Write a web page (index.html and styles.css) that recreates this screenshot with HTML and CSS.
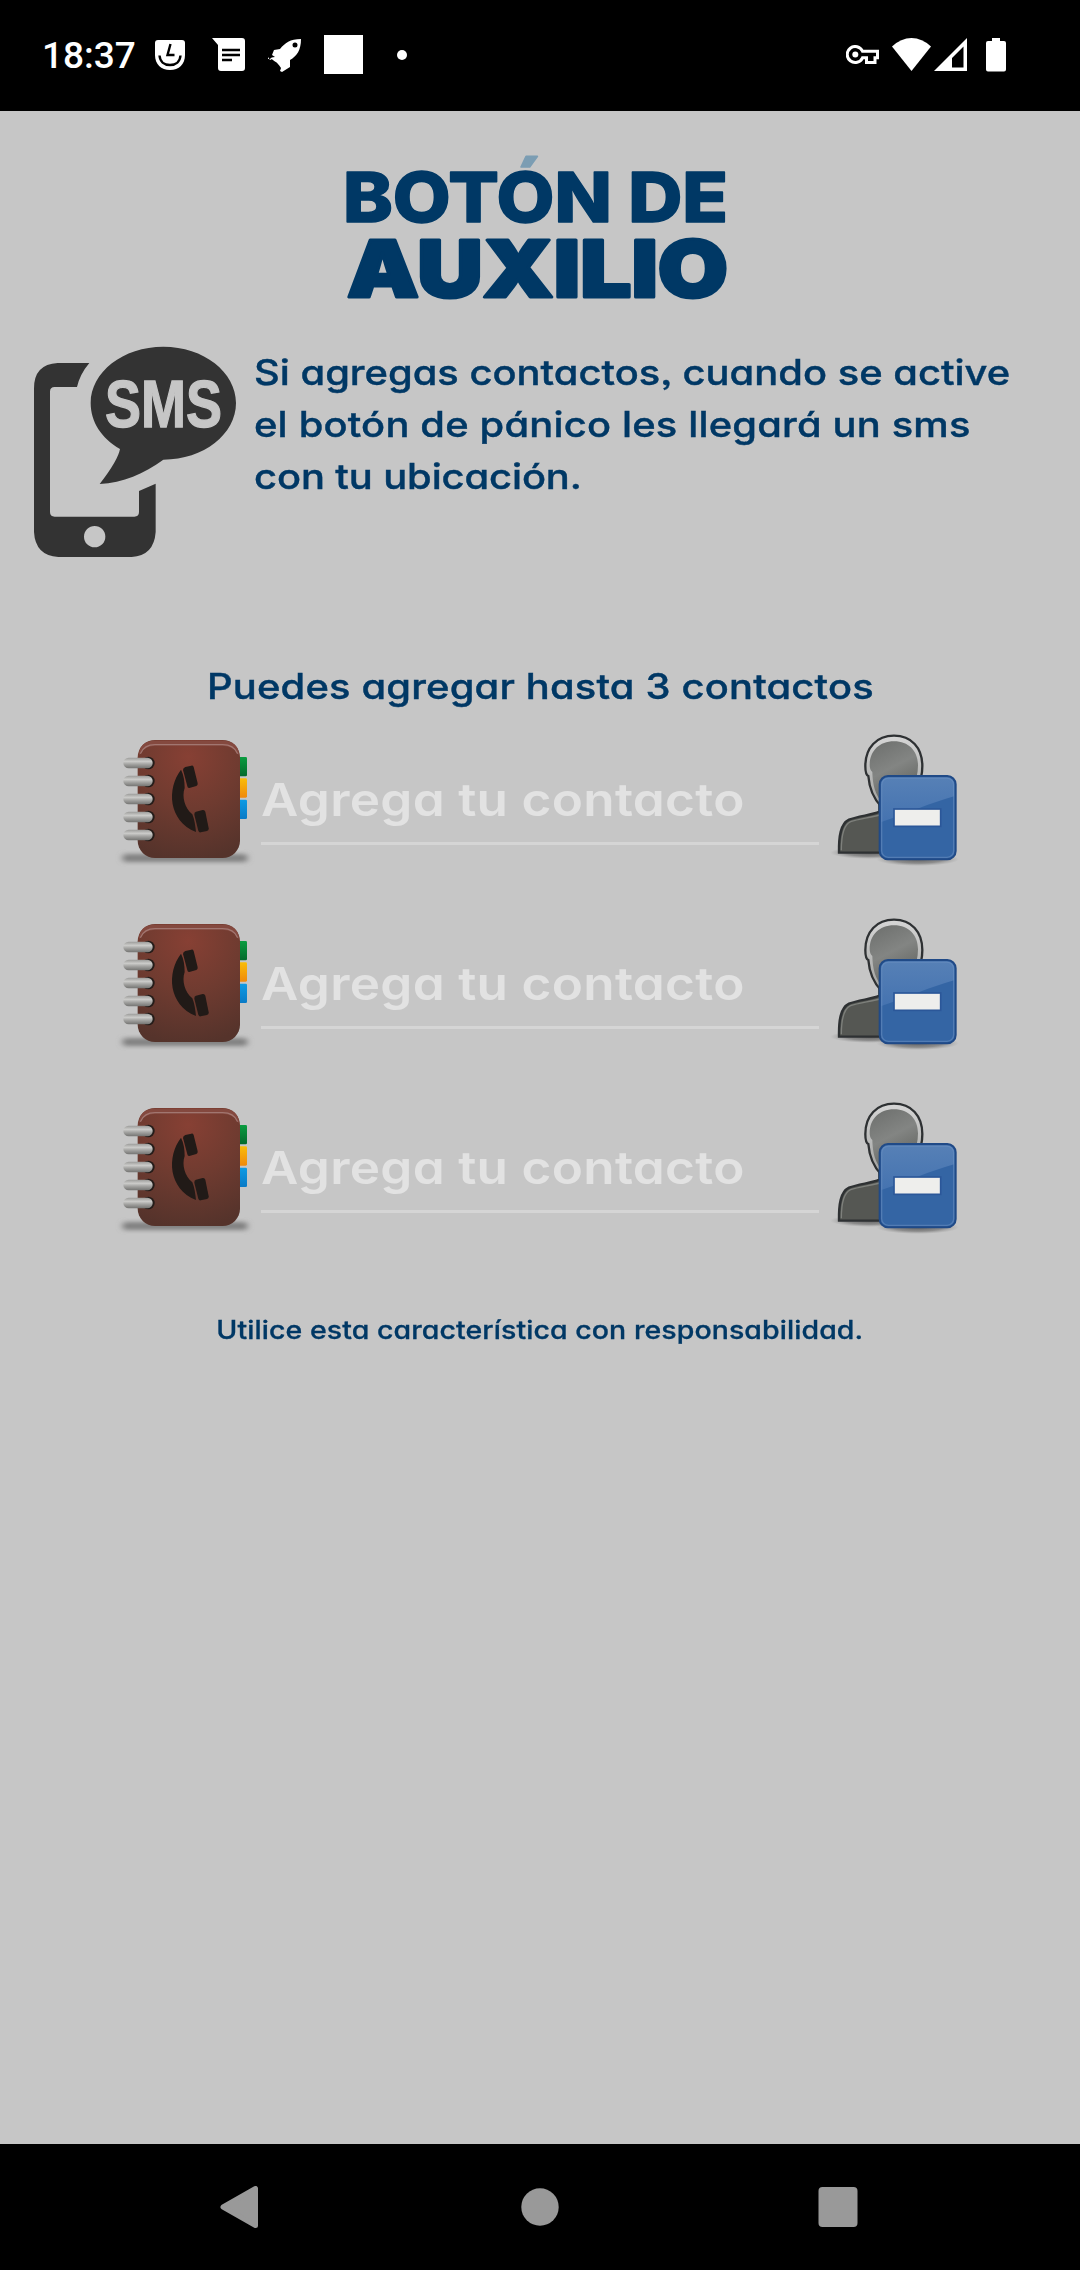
FILE: index.html
```html
<!DOCTYPE html>
<html lang="es">
<head>
<meta charset="utf-8">
<title>Botón de auxilio</title>
<link rel="stylesheet" href="styles.css">
</head>
<body>
<svg class="defs" width="0" height="0" aria-hidden="true">
  <defs>
    <radialGradient id="cover" cx="235" cy="110" r="310" gradientUnits="userSpaceOnUse"><stop offset="0" stop-color="#874034"/><stop offset=".5" stop-color="#6f3b30"/><stop offset="1" stop-color="#55332b"/></radialGradient>
    <linearGradient id="ring" x2="0" y2="1"><stop offset="0" stop-color="#9b9b99"/><stop offset=".35" stop-color="#cbcbc9"/><stop offset=".6" stop-color="#a5a5a3"/><stop offset="1" stop-color="#737371"/></linearGradient>
    <linearGradient id="green" x2="0" y2="1"><stop offset="0" stop-color="#0a9c40"/><stop offset="1" stop-color="#046a2c"/></linearGradient>
    <linearGradient id="amber" x2="0" y2="1"><stop offset="0" stop-color="#f9bd08"/><stop offset="1" stop-color="#f0890c"/></linearGradient>
    <linearGradient id="sky" x2="0" y2="1"><stop offset="0" stop-color="#0e9be4"/><stop offset="1" stop-color="#0a7ac6"/></linearGradient>
    <linearGradient id="head" x1=".2" x2=".6" y2="1"><stop offset="0" stop-color="#6f716f"/><stop offset=".45" stop-color="#838583"/><stop offset="1" stop-color="#5c5e5a"/></linearGradient>
    <linearGradient id="rim" x2="0" y2="1"><stop offset="0" stop-color="#d6d6d6"/><stop offset="1" stop-color="#a0a19f"/></linearGradient>
    <linearGradient id="gloss" x2="0" y2="1"><stop offset="0" stop-color="#5680b6"/><stop offset="1" stop-color="#4573b0"/></linearGradient>
    <radialGradient id="shade"><stop offset="0" stop-color="#555" stop-opacity=".9"/><stop offset=".6" stop-color="#666" stop-opacity=".6"/><stop offset="1" stop-color="#888" stop-opacity="0"/></radialGradient>
    <filter id="soft" x="-10%" y="-100%" width="120%" height="300%"><feGaussianBlur stdDeviation="9 7"/></filter>
    <symbol id="book" viewBox="0 0 450 480">
      <rect x="38" y="402" width="374" height="24" rx="10" fill="#808080" filter="url(#soft)"/>
      <rect x="380" y="111" width="31" height="58" rx="4" fill="url(#green)"/>
      <rect x="380" y="175" width="31" height="58" rx="4" fill="url(#amber)"/>
      <rect x="380" y="239" width="31" height="58" rx="4" fill="url(#sky)"/>
      <rect x="83" y="60" width="307" height="354" rx="52" fill="url(#cover)"/>
      <path d="M86 108Q88 62 135 62H338Q385 62 388 108Q376 79 338 77H135Q98 79 86 108Z" fill="#84493f"/>
      <path d="M91 101Q103 74 135 74H338Q371 74 383 101" fill="none" stroke="#a17670" stroke-width="4"/>
      <g fill="#241c19"><circle cx="115" cy="129" r="19"/><circle cx="115" cy="183" r="19"/><circle cx="115" cy="237" r="19"/><circle cx="115" cy="291" r="19"/><circle cx="115" cy="345" r="19"/></g>
      <g fill="url(#ring)"><rect x="40" y="113" width="88" height="32" rx="16"/><rect x="40" y="167" width="88" height="32" rx="16"/><rect x="40" y="221" width="88" height="32" rx="16"/><rect x="40" y="275" width="88" height="32" rx="16"/><rect x="40" y="329" width="88" height="32" rx="16"/></g>
      <g fill="#211a17">
        <path d="M213 149C170 205 174 302 258 336C256 316 253 296 247 283C224 264 215 230 224 204C224 183 221 164 213 149Z"/>
        <path d="M226 141L244 137Q249 136 251 141L263 190Q264 196 259 198L238 204Q233 205 232 199L219 150Q219 144 226 141Z"/>
        <path d="M258 275L278 270Q284 269 286 275L296 325Q297 331 291 333L272 337Q267 338 265 332L253 284Q252 277 258 275Z"/>
      </g>
    </symbol>
    <symbol id="remove" viewBox="0 0 480 480">
      <ellipse cx="150" cy="398" rx="120" ry="19" fill="url(#shade)"/>
      <ellipse cx="293" cy="418" rx="124" ry="20" fill="url(#shade)"/>
      <path d="M57 398C56 350 61 312 87 299C115 287 155 286 178 275V243H230V398Z" fill="#555753" stroke="#2e3133" stroke-width="7"/>
      <path d="M64 391C64 352 69 315 92 305C120 296 155 293 190 282" fill="none" stroke="#7e807c" stroke-width="4"/>
      <path d="M184 260C155 230 147 195 145 168Q136 165 136 138C136 83 170 47 222 47S307 83 307 138C307 190 285 230 240 260Z" fill="url(#rim)" stroke="#2e3133" stroke-width="7"/>
      <path d="M190 252C165 225 158 195 157 156Q149 150 149 136C149 94 177 64 222 64S294 94 294 136C294 185 270 230 235 252Z" fill="url(#head)"/>
      <rect x="179" y="168" width="228" height="250" rx="25" fill="#3465a4" stroke="#204a87" stroke-width="6"/>
      <path d="M184 306V195Q184 173 206 173H380Q402 173 402 195V229C330 249 260 281 184 306Z" fill="url(#gloss)"/>
      <rect x="185" y="174" width="216" height="238" rx="20" fill="none" stroke="#6f94c4" stroke-opacity=".5" stroke-width="4"/>
      <rect x="222" y="267" width="140" height="52" fill="#eeeeec" stroke="#2b5799" stroke-width="5"/>
    </symbol>
  </defs>
</svg>

<header class="status">
  <div class="status-left">
    <span class="clock">18:37</span>
    <svg class="i-shield" width="30" height="30" viewBox="0 0 30 30"><path d="M3 0H27Q30 0 30 3V15C30 24 24 30 15 30S0 24 0 15V3Q0 0 3 0Z" fill="#fff"/><path d="M15.500 4L12.500 15H19.500" fill="none" stroke="#000" stroke-width="2.400"/><path d="M4.500 15.500C5 21.500 9 25 15 25S25 21.500 25.500 15.500" fill="none" stroke="#000" stroke-width="2.400"/></svg>
    <svg class="i-message" width="33" height="34" viewBox="0 0 33 34"><path d="M0 0H30Q33 0 33 3V30Q33 33 30 33H9Q6 33 6 30V7Z" fill="#fff"/><path d="M10 12H28M10 17H28M10 22H20" stroke="#000" stroke-width="2.600"/></svg>
    <svg class="i-rocket" width="34" height="34" viewBox="0 0 34 34"><path fill="#fff" fill-rule="evenodd" d="M33 0C22 0 17 4 12 10L6 11L4 16L7 18Q3 18 2 20L0 20V18L2 21L4 20C5 22 9 22 13 29L12 32L14 33L22 28V21C29 17 33 11 33 0ZM27 3.500A2.500 2.500 0 1 1 27 8.500A2.500 2.500 0 1 1 27 3.500Z"/></svg>
    <span class="tile"></span>
    <span class="dot"></span>
  </div>
  <div class="status-right">
    <svg width="33" height="20" viewBox="0 0 33 20"><path d="M16.500 6.200A8 8 0 1 0 16.500 12.800H20.500V17.500H29V12.800H31.500V6.200Z" fill="none" stroke="#fff" stroke-width="3"/><circle cx="9.300" cy="9.500" r="3" fill="#fff"/></svg>
    <svg class="i-wifi" width="39" height="33" viewBox="0 0 39 33"><path d="M0 8.500Q9 0 19.500 0T39 8.500L19.500 33Z" fill="#fff"/></svg>
    <svg class="i-signal" width="33" height="33" viewBox="0 0 33 33"><path d="M33 0V33H0ZM29.500 8.500L18 20V29.500H29.500Z" fill="#fff" fill-rule="evenodd"/></svg>
    <svg class="i-battery" width="20" height="34" viewBox="0 0 20 34"><path d="M6 0H14V3H18Q20 3 20 5V31.500Q20 33.500 18 33.500H2Q0 33.500 0 31.500V5Q0 3 2 3H6Z" fill="#fff"/></svg>
  </div>
</header>

<main class="screen">
  <h1 class="logo">
    <svg width="430" height="190" viewBox="320 130 430 190">
      <defs><linearGradient id="accent" gradientUnits="userSpaceOnUse" x1="0" y1="150" x2="0" y2="230"><stop offset=".225" stop-color="#7b9db3"/><stop offset=".225" stop-color="#003865"/></linearGradient></defs>
      <text class="logo-top" x="343" y="222" textLength="385" lengthAdjust="spacingAndGlyphs" fill="url(#accent)" stroke="url(#accent)">BOTÓN DE</text>
      <text class="logo-bottom" x="347" y="297" textLength="381" lengthAdjust="spacingAndGlyphs">AUXILIO</text>
    </svg>
  </h1>

  <section class="intro">
    <svg width="230" height="240" viewBox="0 0 690 720">
      <path fill="#333" fill-rule="evenodd" d="M208 99H113Q42 103 42 175V606Q46 677 115 681H335Q402 677 407 606V461L357 483V546Q357 560 343 560H104Q90 560 90 546V185Q90 171 104 171H171Q180 132 208 99ZM224 588A32 32 0 1 1 224 652A32 32 0 1 1 224 588Z"/>
      <path fill="#333" d="M430 50C551 50 648 126 648 219S551 389 430 389C372 431 309 458 239 462Q294 391 300 357C245 325 212 277 212 219C212 126 309 50 430 50Z"/>
      <text class="sms" x="255" y="290" textLength="351" lengthAdjust="spacingAndGlyphs">SMS</text>
    </svg>
    <p class="intro-text"><span class="line wide">Si agregas contactos, cuando se active</span> <span class="line wide second">el botón de pánico les llegará un sms</span> <span class="line wide third">con tu ubicación.</span></p>
  </section>

  <h2 class="subtitle wide">Puedes agregar hasta 3 contactos</h2>

  <ul class="contacts">
    <li class="contact"><svg width="150" height="160"><use href="#book"/></svg><div class="field"><span class="line wide">Agrega tu contacto</span></div><svg width="160" height="160"><use href="#remove"/></svg></li>
    <li class="contact"><svg width="150" height="160"><use href="#book"/></svg><div class="field"><span class="line wide">Agrega tu contacto</span></div><svg width="160" height="160"><use href="#remove"/></svg></li>
    <li class="contact"><svg width="150" height="160"><use href="#book"/></svg><div class="field"><span class="line wide">Agrega tu contacto</span></div><svg width="160" height="160"><use href="#remove"/></svg></li>
  </ul>

  <p class="notice wide">Utilice esta característica con responsabilidad.</p>
</main>

<nav class="navbar">
  <svg width="42" height="42" viewBox="0 0 42 42"><path d="M3 21L35.500 2.500V39.500Z" fill="#999" stroke="#999" stroke-width="5" stroke-linejoin="round"/></svg>
  <svg width="38" height="38" viewBox="0 0 38 38"><circle cx="19" cy="19" r="18.700" fill="#999"/></svg>
  <svg width="40" height="40" viewBox="0 0 40 40"><rect x=".5" width="39" height="40" rx="4" fill="#999"/></svg>
</nav>
</body>
</html>
```
FILE: styles.css
```css
* { box-sizing: border-box; }
body {
  margin: 0;
  width: 1080px;
  height: 2270px;
  display: flex;
  flex-direction: column;
  background: #c6c6c6;
  color: #003865;
  font-family: Inter, "Open Sans", sans-serif;
  font-feature-settings: "cv11", "ss03";
  overflow: hidden;
}
svg { display: block; flex: none; }
.defs { position: absolute; }
h1, h2, p, ul { margin: 0; padding: 0; }

/* Extended letterforms */
.wide { width: max-content; transform: scaleX(1.14); }
.line { display: block; transform-origin: left; }

.status {
  height: 111px;
  flex: none;
  padding: 0 74px 2px 42px;
  background: #000;
  color: #fff;
  display: flex;
  justify-content: space-between;
  align-items: center;
}
.status-left, .status-right { display: flex; align-items: center; }
.clock { width: 113px; font: 500 37px/44px Roboto, sans-serif; white-space: nowrap; padding-top: 2px; }
.i-message { margin-left: 27px; }
.i-rocket { margin-left: 23px; margin-top: 2px; }
.tile { width: 39px; height: 39px; margin-left: 22px; background: #fff; }
.dot { width: 10px; height: 10px; margin-left: 34px; border-radius: 50%; background: #fff; }
.i-wifi { margin-left: 13px; }
.i-signal { margin-left: 3px; }
.i-battery { margin-left: 19px; }

.screen { height: 2033px; flex: none; padding-top: 19px; }
.logo { padding-left: 320px; height: 200px; }
.logo-top { font-size: 69px; font-weight: 800; stroke-width: 1.5; stroke-linejoin: round; }
.logo-bottom { font-size: 79px; font-weight: 900; fill: #003865; stroke: #003865; stroke-width: 3; stroke-linejoin: round; }

.intro { display: flex; gap: 4px; padding-left: 20px; height: 240px; }
.sms { font: bold 200px "Liberation Sans", sans-serif; fill: #c6c6c6; stroke: #c6c6c6; stroke-width: 4; }
.intro-text { padding-top: 16px; font-size: 35px; font-weight: 500; line-height: 52px; white-space: nowrap; -webkit-text-stroke: .4px; }
.second { letter-spacing: .15px; }
.third { letter-spacing: -.1px; }
.subtitle { margin: 90px auto 0; height: 60px; font-size: 35px; font-weight: 500; line-height: 52px; letter-spacing: .15px; white-space: nowrap; -webkit-text-stroke: .4px; }

.contacts { list-style: none; padding: 0 100px 0 110px; display: grid; gap: 24px; }
.contact { display: flex; height: 160px; }
.field {
  width: 558px;
  height: 125px;
  margin: 0 1px;
  padding-top: 50px;
  border-bottom: 3px solid #d5d5d5;
  color: #e2e2e2;
  font-size: 45px;
  font-weight: 600;
  line-height: 60px;
  letter-spacing: .25px;
  white-space: nowrap;
}
.notice { margin: 64px auto 0; font-size: 25px; font-weight: 500; line-height: 36px; letter-spacing: .06px; white-space: nowrap; -webkit-text-stroke: .3px; }

.navbar {
  height: 126px;
  flex: none;
  padding: 0 222px 0 220px;
  background: #000;
  display: flex;
  align-items: center;
  justify-content: space-between;
}
```
